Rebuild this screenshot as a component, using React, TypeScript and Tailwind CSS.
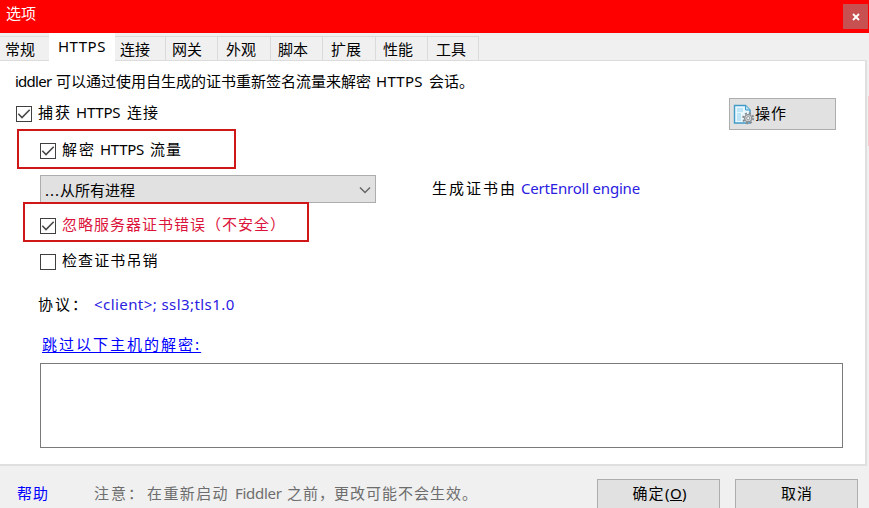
import type { ReactNode } from 'react';
import clsx from 'clsx';

const zh = "font-['Noto_Sans_CJK_SC',sans-serif] text-[15px]";
const en = "font-['Noto_Sans','Noto_Sans_CJK_SC',sans-serif] text-[15px]";

function Seg({ className, latin = false, children }: { className?: string; latin?: boolean; children: ReactNode }) {
  return <span className={clsx('block shrink-0 whitespace-pre', latin ? en : zh, className)}>{children}</span>;
}

function Row({ className, children }: { className: string; children: ReactNode }) {
  return <div className={clsx('flex h-6 items-center leading-6', className)}>{children}</div>;
}

function Check({ checked = false }: { checked?: boolean }) {
  return (
    <span className="mt-[3px] flex size-4 shrink-0 items-center justify-center border border-[#404040] bg-white">
      {checked && (
        <svg viewBox="0 0 14 14" className="size-3.5" fill="none" stroke="#484848" strokeWidth="1.6">
          <path d="M1.3 6.8L5 10.5L12.7 2.8" />
        </svg>
      )}
    </span>
  );
}

function ActionIcon() {
  return (
    <svg viewBox="0 0 22 22" className="size-[22px] shrink-0" fill="none">
      <path d="M1.5 2.5H12.5L17 7V20H1.5Z" fill="#e9f7fe" stroke="#439bc7" strokeWidth="1.4" />
      <path d="M12.5 2.5V7H17" fill="#b8e2f4" stroke="#439bc7" />
      <path d="M4 5h6v4H4zM4 10h4v8H4z" fill="#bde5f7" />
      <circle cx="15.2" cy="15.2" r="5" stroke="#858b90" strokeWidth="2" strokeDasharray="2 1.927" />
      <circle cx="15.2" cy="15.2" r="3.6" fill="#d3d6d8" stroke="#8f9498" strokeWidth="1.4" />
      <circle cx="15.2" cy="15.2" r="1.6" fill="#f1f1f1" stroke="#858c92" strokeWidth=".8" />
    </svg>
  );
}

const tabs = [
  ['连接', 'w-[51px] pl-[5px]'],
  ['网关', 'w-[52px] pl-[6px]'],
  ['外观', 'w-[53px] pl-[8px]'],
  ['脚本', 'w-[52px] pl-[7px]'],
  ['扩展', 'w-[53px] pl-[8px]'],
  ['性能', 'w-[52px] pl-[7px]'],
  ['工具', 'w-[51px] pl-[8px]'],
];

export default function App() {
  return (
    <div className="relative flex h-[508px] w-[869px] flex-col overflow-hidden bg-[#f0f0f0] text-black">
      <header className="flex h-[33px] shrink-0 justify-between bg-[#ff0000] pl-1.5 pr-px text-white">
        <Seg className="leading-[25px]">选项</Seg>
        <button className="mt-1 flex h-[25px] w-[25px] items-center justify-center bg-[#c75050]" aria-label="关闭">
          <svg viewBox="0 0 8 8" className="size-2" stroke="white" strokeWidth="1.8">
            <path d="M1 1L7 7M7 1L1 7" />
          </svg>
        </button>
      </header>

      <nav className="flex h-[27px] shrink-0 items-end">
        <div className="h-6 w-[49px] border-t border-[#dedede] pl-[5px]">
          <Seg className="leading-[23px]">常规</Seg>
        </div>
        <div className="h-[27px] w-[66px] bg-white pl-[9px]">
          <Seg latin className="leading-[27px] tracking-[0.5px]">HTTPS</Seg>
        </div>
        {tabs.map(([label, size]) => (
          <div key={label} className={clsx('h-6 border-r border-t border-[#dadada]', size)}>
            <Seg className="leading-[23px]">{label}</Seg>
          </div>
        ))}
      </nav>

      <main className="flex h-[406px] w-[867px] shrink-0 flex-col border-b-2 border-r-2 border-[#dfdfdf] bg-white">
        <div className="flex h-px shrink-0">
          <div className="w-[49px] bg-[#dcdcdc]" />
          <div className="w-[66px]" />
          <div className="flex-1 bg-[#dcdcdc]" />
        </div>

        <Row className="mt-2 pl-[15px]">
          <Seg latin className="w-[41px] tracking-[-0.75px]">iddler</Seg>
          <Seg className="w-[320px]">可以通过使用自生成的证书重新签名流量来解密</Seg>
          <Seg latin className="w-[53px] tracking-[0.3px]">HTTPS</Seg>
          <Seg>会话。</Seg>
        </Row>

        <div className="flex h-[44px] shrink-0 justify-between pl-4 pr-[29px]">
          <Row className="mt-[7px]">
            <Check checked />
            <Seg className="ml-1.5 w-[38px] tracking-[2px]">捕获</Seg>
            <Seg latin className="w-[51px] tracking-[-0.2px]">HTTPS</Seg>
            <Seg className="tracking-[1px]">连接</Seg>
          </Row>
          <button className="mt-[5px] flex h-8 w-[107px] items-center border border-[#adadad] bg-[#e1e1e1] pl-[3px] leading-6">
            <ActionIcon />
            <Seg className="-mt-0.5 tracking-[1px]">操作</Seg>
          </button>
        </div>

        <Row className="pl-10">
          <Check checked />
          <Seg className="ml-1.5 w-[38px] tracking-[2px]">解密</Seg>
          <Seg latin className="w-[50px] tracking-[-0.3px]">HTTPS</Seg>
          <Seg className="tracking-[1px]">流量</Seg>
        </Row>

        <div className="mt-[14px] flex h-7 shrink-0 items-center pl-10">
          <div className="flex h-7 w-[336px] items-center border border-[#adadad] bg-[#e1e1e1] pl-1 leading-6">
            <Seg latin className="mt-0.5 w-[15px] tracking-[1px]">...</Seg>
            <Seg className="mt-0.5">从所有进程</Seg>
            <svg viewBox="0 0 12 8" className="ml-auto mr-1 mt-0.5 h-2 w-3" fill="none" stroke="#666" strokeWidth="1.5">
              <path d="M1 1.5L6 6.5L11 1.5" />
            </svg>
          </div>
          <Seg className="-mt-0.5 ml-14 w-[89px] leading-6 tracking-[2px]">生成证书由</Seg>
          <Seg latin className="-mt-0.5 leading-6 tracking-[-0.2px] text-[#2a20df]">CertEnroll engine</Seg>
        </div>

        <Row className="mt-[9px] pl-10">
          <Check checked />
          <Seg className="ml-1.5 tracking-[1px] text-[#dc143c]">忽略服务器证书错误（不安全）</Seg>
        </Row>

        <Row className="mt-3 pl-10">
          <Check />
          <Seg className="ml-1.5 tracking-[1.1px]">检查证书吊销</Seg>
        </Row>

        <Row className="mt-5 pl-[38px]">
          <Seg className="w-[56px] tracking-[2px]">协议：</Seg>
          <Seg latin className="tracking-[0.43px] text-[#2a20df]">{'<client>; ssl3;tls1.0'}</Seg>
        </Row>

        <Row className="mt-4 pl-[42px]">
          <Seg className="tracking-[2px] text-[#0000ff] underline underline-offset-[2px]">跳过以下主机的解密:</Seg>
        </Row>

        <div className="ml-10 mt-[7px] h-[85px] w-[803px] shrink-0 border border-[#7a7a7a] bg-white" />
      </main>

      <footer className="flex h-[42px] shrink-0 pl-[17px] leading-6">
        <Seg className="mt-[15px] w-[77px] tracking-[1px] text-[#0000ff]">帮助</Seg>
        <div className="mt-[15px] flex w-[503px] text-[#6d6d6d]">
          <Seg className="w-[53px] tracking-[2px]">注意：</Seg>
          <Seg className="w-[88px] tracking-[1.4px]">在重新启动</Seg>
          <Seg latin className="w-[52px] tracking-[-0.3px]">Fiddler</Seg>
          <Seg className="w-[47px] tracking-[1px]">之前，</Seg>
          <Seg className="tracking-[1px]">更改可能不会生效。</Seg>
        </div>
        <button className="mt-[13px] flex h-[34px] w-[123px] border border-[#adadad] bg-[#e1e1e1] pl-[34px] pt-px">
          <Seg className="w-[33px] tracking-[1px]">确定</Seg>
          <Seg latin className="tracking-[0.4px]">(<u>O</u>)</Seg>
        </button>
        <button className="ml-[15px] mt-[13px] flex h-[34px] w-[123px] border border-[#adadad] bg-[#e1e1e1] pl-[45px] pt-px">
          <Seg className="tracking-[1px]">取消</Seg>
        </button>
      </footer>

      <div className="absolute left-[17px] top-[129px] h-[40px] w-[219px] border-2 border-[#cf1717]" />
      <div className="absolute left-[23px] top-[202px] h-[40px] w-[286px] border-2 border-[#cf1717]" />
      <div className="absolute right-0 top-[96px] h-[50px] w-px bg-[#f5caca]" />
    </div>
  );
}
